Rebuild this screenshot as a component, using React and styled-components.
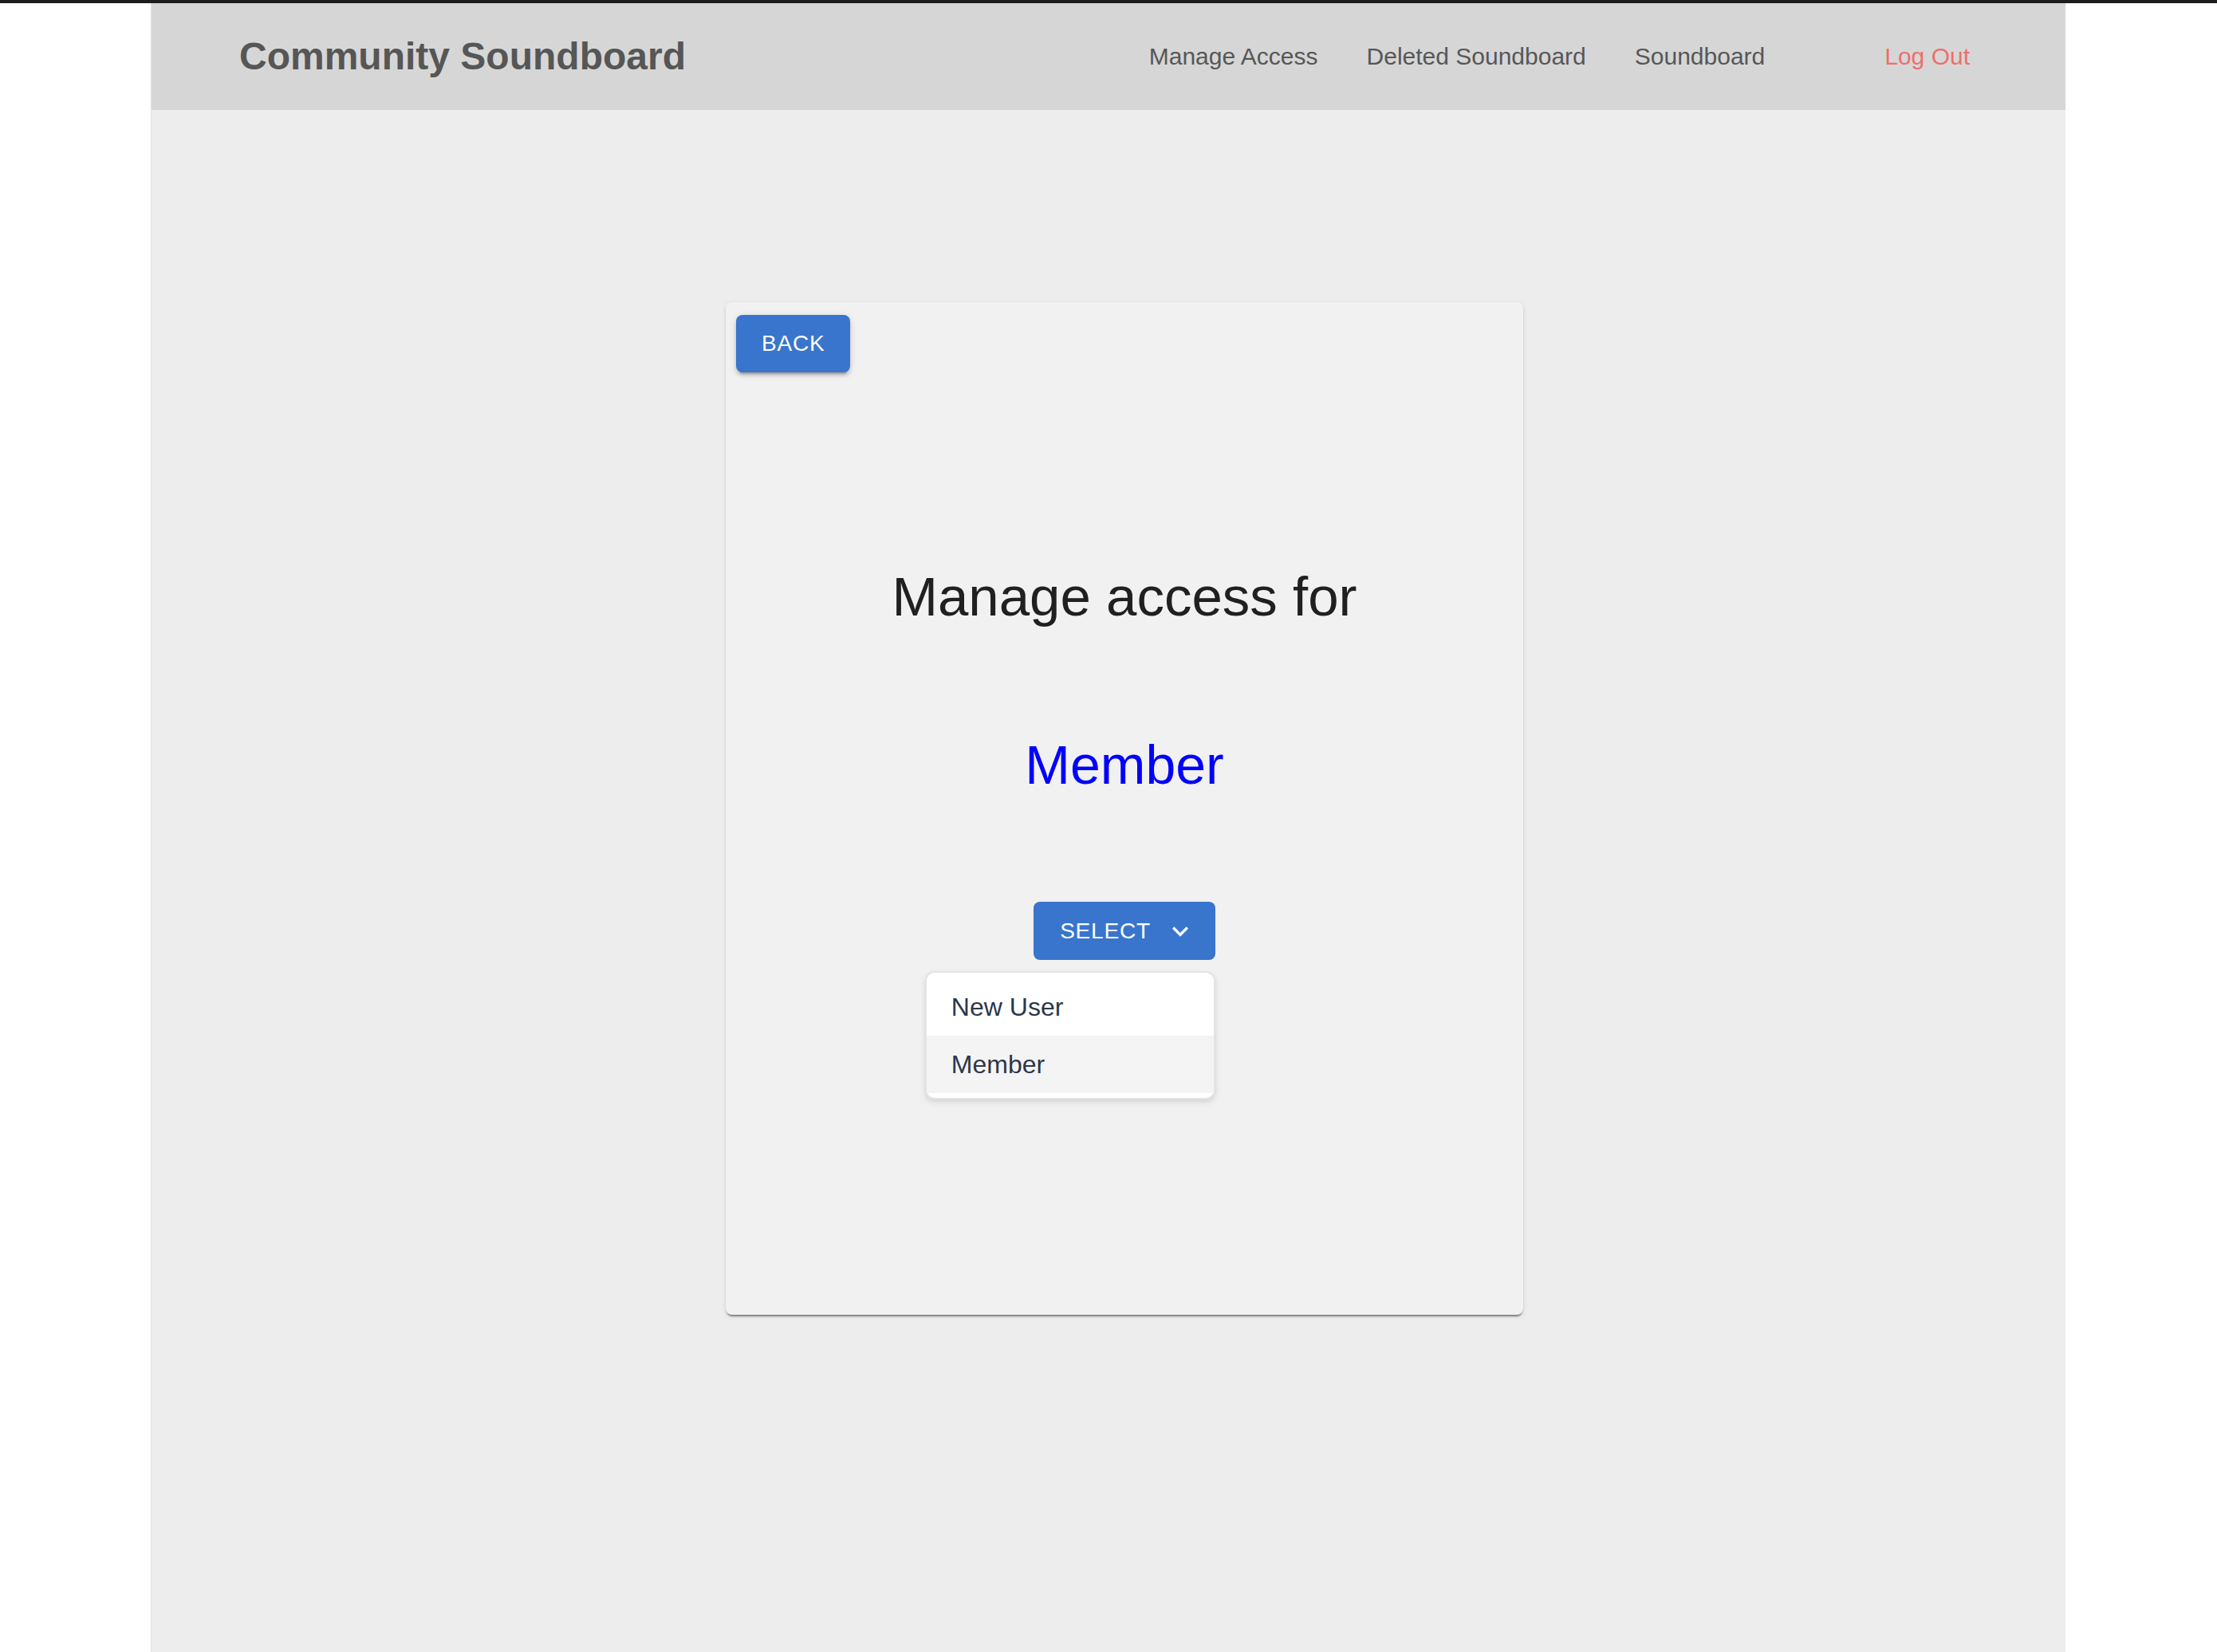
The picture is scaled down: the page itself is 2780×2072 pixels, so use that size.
import React, {Component} from 'react';
import styled, {createGlobalStyle} from "styled-components";

const GlobalStyle = createGlobalStyle`
  body {
    margin: 0;
    background: #ffffff;
    font-family: "Liberation Sans", Arial, Helvetica, sans-serif;
  }
`;

const TopStrip = styled.div`
  height: 4px;
  background: #1c1c1c;
`;

const Page = styled.div`
  width: 2400px;
  margin: 0 auto;
  min-height: calc(100vh - 4px);
  background: #ededed;
  box-shadow: -1px 0 0 #e2e2e2;
`;

const Header = styled.header`
  height: 134px;
  display: flex;
  align-items: center;
  padding: 0 120px 0 110px;
  background: #d6d6d6;
`;

const Brand = styled.h1`
  margin: 0;
  font-size: 48px;
  font-weight: 700;
  color: #565656;
  line-height: 1;
`;

const Nav = styled.nav`
  margin-left: auto;
  display: flex;
  align-items: center;
  gap: 61px;
`;

const NavLink = styled.a`
  font-size: 30px;
  line-height: 1;
  color: ${props => props.danger ? '#ef6f6c' : '#575757'};
  margin-left: ${props => props.danger ? '89px' : '0'};
  text-decoration: none;
  cursor: pointer;
`;

const Main = styled.main`
  display: flex;
  justify-content: center;
  padding: 241px 0 0 40px;
`;

const Card = styled.div`
  width: 1000px;
  height: 1270px;
  background: #f1f1f1;
  border-radius: 8px;
  box-shadow: 0 4px 2px -2px rgba(0, 0, 0, 0.35),
    0 2px 2px 0 rgba(0, 0, 0, 0.12),
    0 2px 6px 0 rgba(0, 0, 0, 0.1);
  display: flex;
  flex-direction: column;
  align-items: center;
`;

const BackRow = styled.div`
  align-self: stretch;
  padding: 16px 0 0 13px;
`;

const Button = styled.button`
  display: inline-flex;
  align-items: center;
  height: ${props => props.tall ? '73px' : '72px'};
  padding: ${props => props.withIcon ? '0 24px 0 33px' : '0 32px'};
  border: none;
  border-radius: 8px;
  background: #3975cc;
  color: #ffffff;
  font-family: "Liberation Sans", Arial, sans-serif;
  font-size: 28px;
  letter-spacing: 0.8px;
  text-transform: uppercase;
  cursor: pointer;
  box-shadow: ${props => props.flat ? 'none' : '0 6px 2px -4px rgba(0,0,0,0.2), 0 4px 4px 0 rgba(0,0,0,0.14), 0 2px 10px 0 rgba(0,0,0,0.12)'};
`;

const IconBox = styled.span`
  display: inline-flex;
  margin-left: 17px;
  width: 40px;
  height: 40px;
`;

const Heading = styled.h2`
  margin: ${props => props.gap}px 0 0;
  font-size: ${props => props.accent ? '68px' : '69px'};
  font-weight: 400;
  line-height: 80px;
  color: ${props => props.accent ? '#0000ff' : '#202020'};
  white-space: nowrap;
`;

const SelectWrap = styled.div`
  position: relative;
  margin-top: 132px;
`;

const Menu = styled.ul`
  position: absolute;
  right: 0;
  top: calc(100% + 14px);
  width: 360px;
  margin: 0;
  padding: 7px 0 6px;
  list-style: none;
  background: #ffffff;
  border: 2px solid #e4e4e7;
  border-radius: 12px;
  box-shadow: 0 4px 10px rgba(0, 0, 0, 0.08), 0 2px 4px rgba(0, 0, 0, 0.06);
`;

const MenuItem = styled.li`
  height: 72px;
  display: flex;
  align-items: center;
  padding-left: 31px;
  font-size: 32px;
  color: #2d3748;
  background: ${props => props.active ? '#f4f4f5' : '#ffffff'};
  cursor: pointer;
`;

class App extends Component {
    constructor(props) {
        super(props);

        this.state = {
            role: 'Member',
            open: true
        }
    }

    render() {
        return (
            <>
                <GlobalStyle/>
                <TopStrip/>
                <Page>
                    <Header>
                        <Brand>Community Soundboard</Brand>
                        <Nav>
                            <NavLink>Manage Access</NavLink>
                            <NavLink>Deleted Soundboard</NavLink>
                            <NavLink>Soundboard</NavLink>
                            <NavLink danger>Log Out</NavLink>
                        </Nav>
                    </Header>
                    <Main>
                        <Card>
                            <BackRow>
                                <Button>Back</Button>
                            </BackRow>
                            <Heading gap={242}>Manage access for</Heading>
                            <Heading gap={130} accent>{this.state.role}</Heading>
                            <SelectWrap>
                                <Button flat withIcon tall>
                                    Select
                                    <IconBox>
                                        <svg viewBox="0 0 24 24" width="40" height="40" fill="#ffffff">
                                            <path d="M16.59 8.59 12 13.17 7.41 8.59 6 10l6 6 6-6z"/>
                                        </svg>
                                    </IconBox>
                                </Button>
                                {this.state.open &&
                                    <Menu>
                                        <MenuItem>New User</MenuItem>
                                        <MenuItem active>Member</MenuItem>
                                    </Menu>
                                }
                            </SelectWrap>
                        </Card>
                    </Main>
                </Page>
            </>
        );
    }
}

export default App;
